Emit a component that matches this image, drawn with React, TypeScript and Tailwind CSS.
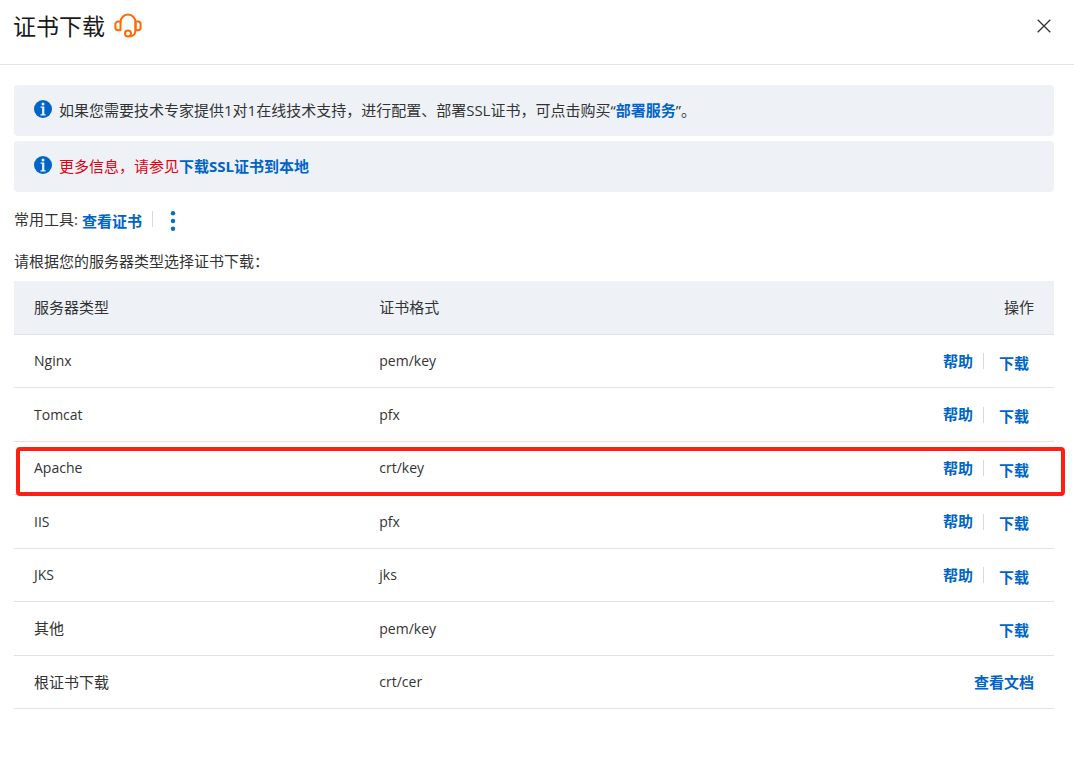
import React from 'react';

const certificates = [
  { type: 'Nginx', format: 'pem/key', help: true },
  { type: 'Tomcat', format: 'pfx', help: true },
  { type: 'Apache', format: 'crt/key', help: true, highlighted: true },
  { type: 'IIS', format: 'pfx', help: true },
  { type: 'JKS', format: 'jks', help: true },
  { type: '其他', format: 'pem/key', chinese: true },
  { type: '根证书下载', format: 'crt/cer', chinese: true, docs: true },
];

const HeadsetIcon = () => (
  <svg className="w-7 h-7" viewBox="0 0 28 28" fill="none" stroke="#ff6a00" strokeWidth="2" strokeLinejoin="round">
    <path d="M6.5 9.6v8.6H4a2.6 2.6 0 0 1-2.6-2.6v-3.4A2.6 2.6 0 0 1 4 9.6z" />
    <path d="M21.5 9.6v8.6H24a2.6 2.6 0 0 0 2.6-2.6v-3.4A2.6 2.6 0 0 0 24 9.6z" />
    <path d="M6.5 10.2a7.5 7.8 0 0 1 15 0v8a6.6 6.6 0 0 1-5.2 6.3" />
    <circle cx="14" cy="21.6" r="3" />
  </svg>
);

const InfoIcon = () => (
  <svg className="w-[18px] h-[18px] shrink-0" viewBox="0 0 18 18">
    <circle cx="9" cy="9" r="9" fill="#0064c8" />
    <circle cx="9" cy="3.9" r="1.5" fill="#eef2f7" />
    <path d="M6.6 6.6h3.7v7.6h1.4v1.2H6.5v-1.2h1.6V7.8H6.6z" fill="#eef2f7" />
  </svg>
);

const Notice = ({ children }: { children: React.ReactNode }) => (
  <div className="flex items-start gap-[7px] min-h-[51px] rounded-sm bg-[#eef2f7] px-5 py-[15px]">
    <InfoIcon />
    <p className="leading-5">{children}</p>
  </div>
);

const App = () => {
  return (
    <div
      className="min-h-screen bg-white text-[15px] text-[#333]"
      style={{ fontFamily: '"Open Sans", "Noto Sans CJK SC", sans-serif' }}
    >
      {/* Header */}
      <header className="flex items-center justify-between h-[65px] border-b border-[#e3e4e6] pl-[13px] pr-[22px] pb-3">
        <div className="flex items-center gap-[9px]">
          <h1 className="text-[23px] leading-8 text-[#1a1a1a]">证书下载</h1>
          <button aria-label="在线客服">
            <HeadsetIcon />
          </button>
        </div>
        <button aria-label="关闭">
          <svg className="w-4 h-4" viewBox="0 0 16 16" fill="none" stroke="#333" strokeWidth="1.3">
            <path d="M1.7 1.7l12.6 12.6M14.3 1.7L1.7 14.3" />
          </svg>
        </button>
      </header>

      <main className="pl-[14px] pr-5 pt-5 pb-8">
        {/* Notices */}
        <div className="flex flex-col gap-[5px]">
          <Notice>
            如果您需要技术专家提供1对1在线技术支持，进行配置、部署SSL证书，可点击购买“
            <a href="#service" className="font-bold text-[#0064c8]">部署服务</a>”。
          </Notice>
          <Notice>
            <span className="text-[#e60012]">更多信息，请参见</span>
            <a href="#download" className="font-bold text-[#0064c8]">下载SSL证书到本地</a>
          </Notice>
        </div>

        {/* Tools */}
        <div className="flex items-center h-6 mt-[15px]">
          <span className="leading-6">常用工具:</span>
          <button className="ml-1 pt-1 leading-6 font-bold text-[#0064c8]">查看证书</button>
          <span className="ml-[10px] w-px h-4 bg-[#d9d9d9]" />
          <button aria-label="更多" className="ml-4 pt-1">
            <svg className="w-2 h-5" viewBox="0 0 8 20" fill="#0070cc">
              <circle cx="4" cy="2.2" r="2.2" />
              <circle cx="4" cy="10" r="2.2" />
              <circle cx="4" cy="17.8" r="2.2" />
            </svg>
          </button>
        </div>

        <p className="mt-[18px] mb-2 leading-6">请根据您的服务器类型选择证书下载：</p>

        {/* Certificate table */}
        <table className="w-full table-fixed border-separate border-spacing-0 text-left">
          <thead>
            <tr className="h-[54px] bg-[#eef2f7]">
              <th className="w-[33.2%] border-b border-[#dfe2e6] px-5 font-normal">服务器类型</th>
              <th className="border-b border-[#dfe2e6] px-5 font-normal">证书格式</th>
              <th className="border-b border-[#dfe2e6] px-5 font-normal text-right">操作</th>
            </tr>
          </thead>
          <tbody>
            {certificates.map((cert) => (
              <tr key={cert.type} className="relative odd:h-[53px] even:h-[54px]">
                <td className={`border-b border-[#dfe2e6] px-5 ${cert.chinese ? '' : 'text-sm'}`}>
                  {cert.type}
                  {cert.highlighted && (
                    <span className="absolute left-[2px] -right-[11px] top-[5px] h-[49px] rounded-sm border-4 border-[#ff1e12] z-10 pointer-events-none" />
                  )}
                </td>
                <td className="border-b border-[#dfe2e6] px-5 text-sm">{cert.format}</td>
                <td className="border-b border-[#dfe2e6] px-5">
                  <div className="flex items-center justify-end font-bold text-[#0064c8]">
                    {cert.help && (
                      <>
                        <a href="#help">帮助</a>
                        <span className="mx-[10px] w-px h-4 bg-[#d9d9d9]" />
                      </>
                    )}
                    {cert.docs ? (
                      <a href="#docs">查看文档</a>
                    ) : (
                      <button className="px-[5px] pt-1">下载</button>
                    )}
                  </div>
                </td>
              </tr>
            ))}
          </tbody>
        </table>
      </main>
    </div>
  );
};

export default App;
